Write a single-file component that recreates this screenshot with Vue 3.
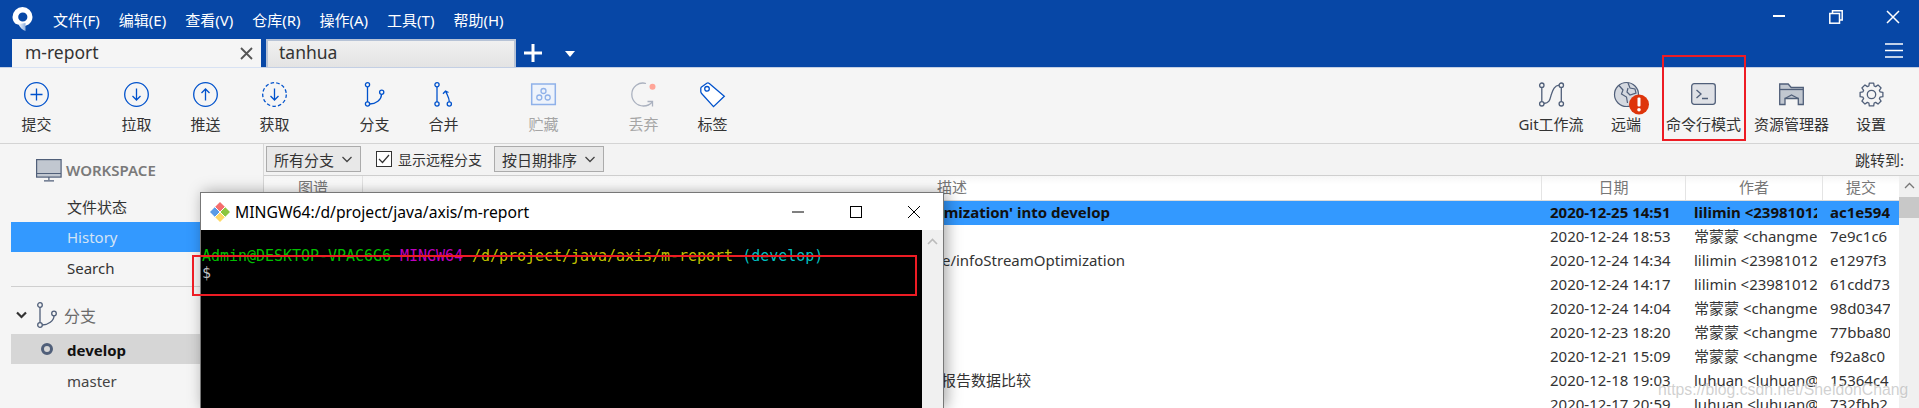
<script setup>
const menus = ['文件(F)', '编辑(E)', '查看(V)', '仓库(R)', '操作(A)', '工具(T)', '帮助(H)']
const lili = 'lilimin <23981012@qq.com>'
const chang = '常蒙蒙 <changmengmeng@qq.com>'
const lu = 'luhuan <luhuan@qq.com>'
const rows = [
  { date: '2020-12-25 14:51', author: 'lilimin <2398101234@qq.com>', hash: 'ac1e594', desc: "'feature/infoStreamOptimization' into develop", end: 432, sel: true },
  { date: '2020-12-24 18:53', author: chang, hash: '7e9c1c6', desc: '', end: 0 },
  { date: '2020-12-24 14:34', author: lili, hash: 'e1297f3', desc: 'origin/feature/infoStreamOptimization', end: 417 },
  { date: '2020-12-24 14:17', author: lili, hash: '61cdd73', desc: '', end: 0 },
  { date: '2020-12-24 14:04', author: chang, hash: '98d0347', desc: '', end: 0 },
  { date: '2020-12-23 18:20', author: chang, hash: '77bba80', desc: '', end: 0 },
  { date: '2020-12-21 15:09', author: chang, hash: 'f92a8c0', desc: '', end: 0 },
  { date: '2020-12-18 19:03', author: lu, hash: '15364c4', desc: '报告数据比较', end: 511 },
  { date: '2020-12-17 20:59', author: lu, hash: '732fbb2', desc: '', end: 0 }
]
function gearPath() {
  const cx = 12.5, cy = 12.5, n = 8
  let d = ''
  for (let i = 0; i < n; i++) {
    const a = (i / n) * Math.PI * 2
    const pts = [[-0.3, 8.9], [-0.19, 11.6], [0.19, 11.6], [0.3, 8.9]]
    pts.forEach(([o, r], j) => {
      const x = cx + r * Math.sin(a + o)
      const y = cy - r * Math.cos(a + o)
      d += (i === 0 && j === 0 ? 'M' : 'L') + x.toFixed(2) + ' ' + y.toFixed(2) + ' '
    })
  }
  return d + 'Z'
}
const gear = gearPath()
</script>

<template>
  <div class="app">
    <header class="head">
      <div class="menubar">
        <svg class="logo" width="21" height="24" viewBox="0 0 21 24">
          <defs>
            <linearGradient id="lg" x1="0" y1="0" x2="1" y2="0">
              <stop offset="0" stop-color="#fff" />
              <stop offset="1" stop-color="#8fb0de" />
            </linearGradient>
          </defs>
          <path fill-rule="evenodd" fill="#fff" d="M10.500 0a10 10 0 0 1 10 10c0 3-1.600 5.800-4 7.500L13 19C10 17.800 6.500 18 3.500 16.800 1.500 15 .5 12.500.5 10a10 10 0 0 1 10-10Zm.3 5.400a4.600 4.600 0 1 0 0 9.200 4.600 4.600 0 0 0 0-9.200Z" />
          <path fill="url(#lg)" d="M6 16.500c2 .5 4.500-.2 7.500-.5V24C10.500 23 8 20.500 6 16.500Z" />
        </svg>
        <nav class="menus">
          <span v-for="m in menus" :key="m">{{ m }}</span>
        </nav>
        <div class="winctl">
          <svg width="14" height="14" viewBox="0 0 14 14"><path d="M1 6h12" stroke="#fff" stroke-width="2" /></svg>
          <svg width="14" height="14" viewBox="0 0 14 14" fill="none" stroke="#fff" stroke-width="1.500"><path d="M3.500 3V.8h9.700v9.200H11" /><rect x=".8" y="3.500" width="9.700" height="9.700" /></svg>
          <svg width="14" height="14" viewBox="0 0 14 14" stroke="#fff" stroke-width="1.500"><path d="M1 1l12 12M13 1L1 13" /></svg>
        </div>
      </div>
      <div class="tabbar">
        <div class="tab active">
          <span>m-report</span>
          <svg width="13" height="13" viewBox="0 0 13 13" stroke="#555" stroke-width="1.800"><path d="M1 1l11 11M12 1L1 12" /></svg>
        </div>
        <div class="tab other"><span>tanhua</span></div>
        <svg class="plus" width="18" height="18" viewBox="0 0 18 18" stroke="#fff" stroke-width="3"><path d="M9 0v18M0 9h18" /></svg>
        <svg class="caret" width="10" height="6" viewBox="0 0 10 6"><path d="M0 0h10L5 6Z" fill="#fff" /></svg>
        <svg class="burger" width="18" height="15" viewBox="0 0 18 15" stroke="#fff" stroke-width="1.500"><path d="M0 1h18M0 7.500h18M0 14h18" /></svg>
      </div>
    </header>

    <section class="toolbar">
      <div class="tools-left">
        <div class="group">
          <div class="tool">
            <svg class="ic" viewBox="0 0 25 25" fill="none" stroke="#0052cc" stroke-width="1.300"><circle cx="12.500" cy="12.500" r="11.800" /><path d="M12.500 6.500v12M6.500 12.500h12" /></svg>
            <span>提交</span>
          </div>
        </div>
        <div class="group">
          <div class="tool">
            <svg class="ic" viewBox="0 0 25 25" fill="none" stroke="#0052cc" stroke-width="1.300"><circle cx="12.500" cy="12.500" r="11.800" /><path d="M12.500 6.500v11.500M8.500 14l4 4 4-4" /></svg>
            <span>拉取</span>
          </div>
          <div class="tool">
            <svg class="ic" viewBox="0 0 25 25" fill="none" stroke="#0052cc" stroke-width="1.300"><circle cx="12.500" cy="12.500" r="11.800" /><path d="M12.500 18.500V7M8.500 11l4-4 4 4" /></svg>
            <span>推送</span>
          </div>
          <div class="tool">
            <svg class="ic" viewBox="0 0 25 25" fill="none" stroke="#0052cc" stroke-width="1.300"><circle cx="12.500" cy="12.500" r="11.800" stroke-dasharray="3.500 2.200" /><path d="M12.500 6.500v11.500M8.500 14l4 4 4-4" /></svg>
            <span>获取</span>
          </div>
        </div>
        <div class="group">
          <div class="tool">
            <svg class="ic" viewBox="0 0 25 25" fill="none" stroke="#0052cc" stroke-width="1.300"><circle cx="5.500" cy="2.800" r="2.100" /><circle cx="5.500" cy="22" r="2.100" /><circle cx="19.700" cy="10.200" r="2.100" /><path d="M5.500 5v15M19.500 12.400C19.300 18 14 22 7.700 22" /></svg>
            <span>分支</span>
          </div>
          <div class="tool">
            <svg class="ic" viewBox="0 0 25 25" fill="none" stroke="#0052cc" stroke-width="1.300"><circle cx="6" cy="2.800" r="2.100" /><circle cx="6" cy="22" r="2.100" /><circle cx="18.300" cy="22" r="2.100" /><path d="M6 5v15M18.300 19.800C18.300 15.500 16 13 14.800 9.500M12 11.700l2.500-2.700 3 1.500" /></svg>
            <span>合并</span>
          </div>
        </div>
        <div class="group">
          <div class="tool dim">
            <svg class="ic" viewBox="0 0 25 25" fill="#eef3fb" stroke="#8fb1e9" stroke-width="1.300"><rect x=".7" y="2" width="23.600" height="20.500" stroke-width="1.500" /><circle cx="12.500" cy="9" r="2.500" fill="none" /><circle cx="8.300" cy="15.500" r="2.500" fill="none" /><circle cx="16.700" cy="15.500" r="2.500" fill="none" /></svg>
            <span>贮藏</span>
          </div>
        </div>
        <div class="group">
          <div class="tool dim">
            <svg class="ic" viewBox="0 0 25 25" fill="none" stroke="#aab1bf" stroke-width="1.300"><path d="M15 1.500C8 -.5 .8 4.500 .8 12.300.8 19 6 24 12.500 24c3.500 0 6.500-1.300 8.800-4" /><path d="M16.500 19.500h5v5" /><circle cx="21.500" cy="4.800" r="3" fill="#ffa598" stroke="none" /></svg>
            <span>丢弃</span>
          </div>
          <div class="tool">
            <svg class="ic" viewBox="0 0 25 25" fill="#fff" stroke="#0052cc" stroke-width="1.300"><path d="M1.200 5.300 6.800 1.200Q8 .4 9 1.300L24.300 14.200 13.500 24.600 1.600 11.500Q.8 10.600.8 9.500V6.500Q.8 5.800 1.200 5.300Z" /><circle cx="7" cy="6.800" r="2.300" fill="none" /></svg>
            <span>标签</span>
          </div>
        </div>
      </div>
      <div class="tools-right">
        <div class="tool">
          <svg class="ic" viewBox="0 0 25 25" fill="none" stroke="#505f79" stroke-width="1.300"><circle cx="2.800" cy="3.200" r="2.200" /><circle cx="2.800" cy="21.800" r="2.200" /><circle cx="22.300" cy="3.200" r="2.200" /><circle cx="22.300" cy="21.800" r="2.200" /><path d="M2.800 5.400v14.200M22.300 5.400v14.200M5 21.500c6.500-.5 6-5.500 7.500-9.500 1.500-4.500 3-8.500 7.600-8.800" /></svg>
          <span>Git工作流</span>
        </div>
        <div class="tool">
          <svg class="ic ic-over" viewBox="0 0 37 35">
            <circle cx="12.500" cy="12.500" r="12" fill="#d5d9e0" stroke="#505f79" stroke-width="1.200" />
            <path d="M5 3.500 9 8l-1.500 4 5 3 1 6M14 1l2 5 5 1 1 4-6 2-3-3 1-4" fill="none" stroke="#505f79" stroke-width="1.200" />
            <circle cx="25" cy="22.500" r="10" fill="#de350b" />
            <rect x="23.500" y="15.500" width="3" height="9" rx="1" fill="#fff" />
            <circle cx="25" cy="27.800" r="1.800" fill="#fff" />
          </svg>
          <span>远端</span>
        </div>
        <div class="tool">
          <svg class="ic" viewBox="0 0 25 25" fill="none" stroke="#505f79" stroke-width="1.300"><rect x=".7" y="1.700" width="23.600" height="20.600" rx="2.500" fill="#dfe1e6" /><path d="M5.500 8l4.500 4-4.500 4M11 16.500h6" /></svg>
          <span>命令行模式</span>
        </div>
        <div class="tool">
          <svg class="ic" viewBox="0 0 25 25" fill="#c1c7d0" stroke="#505f79" stroke-width="1.300"><path d="M.7 22.500V2h8.500l3 3.500h12.100v17h-5v-6H6v6Z" /><path d="M1 7.500h23" fill="none" /><path d="M6 16.500l6.500-3.500 6.800 3.500" fill="none" /></svg>
          <span>资源管理器</span>
        </div>
        <div class="tool">
          <svg class="ic" viewBox="0 0 25 25" fill="none" stroke="#505f79" stroke-width="1.300"><path :d="gear" stroke-linejoin="round" /><circle cx="12.500" cy="12.500" r="4.200" /></svg>
          <span>设置</span>
        </div>
      </div>
    </section>

    <main class="main">
      <aside class="side">
        <div class="ws">
          <svg width="26" height="23" viewBox="0 0 26 23" fill="#c1c7d0" stroke="#505f79" stroke-width="1.200"><rect x=".6" y=".6" width="24.500" height="17.500" /><path d="M1 14.500h24M12.900 18v3M8 21.800h10" fill="none" /></svg>
          <span>WORKSPACE</span>
        </div>
        <div class="item first">文件状态</div>
        <div class="item hist">History</div>
        <div class="item low">Search</div>
        <div class="sep"></div>
        <div class="branches">
          <svg width="11" height="8" viewBox="0 0 11 8" fill="none" stroke="#333" stroke-width="2.200"><path d="M1 1.500l4.500 4.500L10 1.500" /></svg>
          <svg width="21" height="26" viewBox="0 0 21 26" fill="none" stroke="#505f79" stroke-width="1.300"><circle cx="4" cy="3" r="2.300" /><circle cx="4" cy="23" r="2.300" /><circle cx="18" cy="11.500" r="2.300" /><path d="M4 5.300v15.400M18 13.800C18 19 12 23 6.300 23" /></svg>
          <span>分支</span>
        </div>
        <div class="item cur low"><i class="dot"></i>develop</div>
        <div class="item master">master</div>
      </aside>

      <div class="content">
        <div class="filters">
          <div class="drop d1">所有分支<svg width="12" height="7" viewBox="0 0 12 7" fill="none" stroke="#444" stroke-width="1.300"><path d="M1.500 1l4.500 4.500L10.500 1" /></svg></div>
          <div class="chk">
            <svg width="16" height="16" viewBox="0 0 16 16" fill="#fff" stroke="#333" stroke-width="1"><rect x=".5" y=".5" width="15" height="15" /><path d="M3 8l3.500 3.500L13 4" fill="none" stroke-width="1.200" /></svg>
            <span>显示远程分支</span>
          </div>
          <div class="drop d2">按日期排序<svg width="12" height="7" viewBox="0 0 12 7" fill="none" stroke="#444" stroke-width="1.300"><path d="M1.500 1l4.500 4.500L10.500 1" /></svg></div>
          <span class="jump">跳转到:</span>
        </div>
        <div class="tablewrap">
          <div class="table">
            <div class="thead">
              <div>图谱</div><div>描述</div><div>日期</div><div>作者</div><div>提交</div>
            </div>
            <div v-for="r in rows" :key="r.hash" class="row" :class="{ sel: r.sel }">
              <div class="graph"></div>
              <div class="desc" :style="{ paddingRight: r.end + 'px' }">{{ r.desc }}</div>
              <div class="cell date">{{ r.date }}</div>
              <div class="cell author">{{ r.author }}</div>
              <div class="cell hash">{{ r.hash }}</div>
            </div>
          </div>
          <div class="sb">
            <svg width="11" height="7" viewBox="0 0 11 7" fill="none" stroke="#777" stroke-width="1.300"><path d="M1 6l4.500-4.500L10 6" /></svg>
            <div class="thumb"></div>
          </div>
        </div>
      </div>
    </main>

    <div class="term">
      <div class="term-title">
        <svg width="20" height="20" viewBox="0 0 20 20">
          <path d="M10 0 5 5l5 5 5-5Z" fill="#f46d6d" />
          <path d="M5 5 0 10l5 5 5-5Z" fill="#5b9be6" />
          <path d="M15 5l-5 5 5 5 5-5Z" fill="#8dc63f" />
          <path d="M10 10l-5 5 5 5 5-5Z" fill="#ffd966" />
          <path d="M5 5l10 10M15 5 5 15" stroke="#fff" stroke-width="1" />
        </svg>
        <span class="tt">MINGW64:/d/project/java/axis/m-report</span>
        <div class="tctl">
          <svg width="12" height="12" viewBox="0 0 12 12" stroke="#000"><path d="M0 6h12" /></svg>
          <svg width="12" height="12" viewBox="0 0 12 12" fill="none" stroke="#000"><rect x=".5" y=".5" width="11" height="11" /></svg>
          <svg width="12" height="12" viewBox="0 0 12 12" stroke="#000"><path d="M0 0l12 12M12 0 0 12" /></svg>
        </div>
      </div>
      <div class="term-body">
        <pre class="tty"><span class="g">Admin@DESKTOP-VPAC6G6</span> <span class="m">MINGW64</span> <span class="y">/d/project/java/axis/m-report</span> <span class="c">(develop)</span>
<span class="w">$</span></pre>
        <div class="term-sb">
          <svg width="11" height="7" viewBox="0 0 11 7" fill="none" stroke="#bbb" stroke-width="1.600"><path d="M1 6l4.500-4.500L10 6" /></svg>
        </div>
      </div>
    </div>

    <div class="red r1"></div>
    <div class="red r2"></div>
    <div class="mark">https://blog.csdn.net/SheldonChang</div>
  </div>
</template>

<style>
html, body { margin: 0; overflow: hidden; background: #f5f5f5; }
</style>

<style scoped>
.app {
  position: relative;
  width: 1919px;
  height: 408px;
  overflow: hidden;
  font-family: "Noto Sans", "Noto Sans CJK SC", sans-serif;
  font-size: 15px;
  color: #333;
  background: #f5f5f5;
}
svg { display: block; flex: none; }
.head { background: #0747a6; height: 67px; border-bottom: 1px solid #c3cfe4; }
.menubar { height: 39px; display: flex; align-items: center; position: relative; }
.logo { margin-left: 12px; margin-top: -1px; }
.menus { display: flex; gap: 19px; margin-left: 20px; color: #fff; line-height: 38px; }
.winctl { margin-left: auto; margin-right: 19px; display: flex; gap: 43px; margin-top: -5px; }
.tabbar { height: 28px; display: flex; align-items: flex-start; position: relative; padding-left: 12px; }
.tab {
  box-sizing: border-box;
  height: 29px;
  display: flex;
  align-items: center;
  font-size: 17.500px;
  color: #333;
}
.tab.active { width: 249px; background: #f5f5f5; padding: 0 8px 3px 13px; justify-content: space-between; border-bottom: 1px solid #d8e2f3; }
.tab.active svg { margin-top: 3px; }
.tab.other {
  width: 250px;
  height: 28px;
  margin-left: 5px;
  padding: 0 0 4px 11px;
  background: linear-gradient(#f0f0f0, #e3e3e3);
  border: 2px solid #b7c3d6;
  border-bottom: 0;
}
.plus { margin: 5px 0 0 8px; }
.caret { margin: 12px 0 0 23px; }
.burger { margin: 4px 16px 0 auto; }

.toolbar {
  box-sizing: border-box;
  height: 76px;
  display: flex;
  justify-content: space-between;
  border-bottom: 1px solid #d4d4d4;
  background: #f5f5f5;
}
.tools-left { display: flex; gap: 31px; padding-left: 2px; }
.group { display: flex; }
.group .tool { width: 69px; }
.tools-right { display: grid; grid-template-columns: 88px 62px 93px 83px 76px; padding-right: 10px; }
.tool { display: flex; flex-direction: column; align-items: center; padding-top: 14px; color: #333; position: relative; }
.tool span { line-height: 20px; margin-top: 7px; white-space: nowrap; }
.tool.dim span { color: #a5a5a5; }
.ic { width: 25px; height: 25px; overflow: visible; }
.ic-over { width: 37px; height: 35px; margin: 0 -12px -10px 0; }

.main { display: flex; height: 264px; }
.side { width: 263px; border-right: 1px solid #d8d8d8; flex: none; box-sizing: content-box; }
.ws { display: flex; align-items: center; gap: 4px; height: 30px; margin: 11px 0 0 36px; font-weight: 600; color: #7a7a7a; }
.item { margin-left: 11px; padding-left: 56px; height: 30px; line-height: 30px; position: relative; }
.item.first { margin-top: 7px; }
.item.hist { background: #3399ff; color: #d3e4f5; }
.item.low { line-height: 32px; }
.item.master { margin-top: 2px; color: #444; }
.sep { margin: 4px 0 0 11px; border-top: 1px solid #cfcfcf; }
.branches { display: flex; align-items: center; height: 30px; margin-top: 13px; padding-left: 16px; color: #6b6b6b; font-size: 16px; }
.branches svg:nth-child(2) { margin: 0 7px 0 9px; }
.item.cur { margin-top: 4px; background: #d6d6d6; font-weight: 700; color: #111; }
.dot { position: absolute; left: 30px; top: 9px; width: 6px; height: 6px; border: 3px solid #505f79; border-radius: 50%; }

.content { flex: 1; min-width: 0; display: flex; flex-direction: column; }
.filters { box-sizing: border-box; height: 32px; display: flex; align-items: flex-start; background: #f3f3f3; border-bottom: 1px solid #cfcfcf; position: relative; padding: 2px 0 0 2px; }
.drop { box-sizing: border-box; height: 26px; display: flex; align-items: center; justify-content: space-between; background: #e8e8e8; border: 1px solid #ababab; padding: 0 7px; }
.d1 { width: 95px; }
.d2 { width: 110px; margin-left: 13px; }
.chk { display: flex; align-items: center; height: 26px; gap: 6px; margin-left: 15px; width: 105px; white-space: nowrap; font-size: 14px; }
.jump { margin-left: auto; margin-right: 15px; line-height: 28px; }
.tablewrap { flex: 1; display: flex; min-height: 0; }
.table { width: 1635px; flex: none; background: #fff; overflow: hidden; }
.thead { display: grid; grid-template-columns: 99px 1179px 144px 137px 76px; height: 25px; box-sizing: border-box; background: linear-gradient(#f6f6f6, #fff 35%); border-bottom: 1px solid #dcdcdc; }
.thead div { text-align: center; color: #777; line-height: 22px; border-right: 1px solid #e4e4e4; }
.thead div:last-child { border-right: 0; }
.row { display: grid; grid-template-columns: 99px 1179px 144px 137px 76px; height: 24px; line-height: 22px; }
.row.sel { background: #3399ff; color: #111; font-weight: 700; }
.desc { text-align: right; white-space: nowrap; overflow: hidden; box-sizing: border-box; }
.cell { white-space: nowrap; overflow: hidden; }
.date { padding-left: 8px; }
.author { padding-left: 8px; margin-right: 6px; }
.hash { padding-left: 7px; margin-right: 9px; }
.sb { flex: 1; background: #f0f0f0; position: relative; }
.sb svg { margin: 6px auto 0; }
.thumb { position: absolute; left: 0; right: 0; top: 21px; height: 21px; background: #c8c8c8; }

.term { position: absolute; left: 200px; top: 192px; width: 744px; height: 216px; box-sizing: border-box; border: 1px solid #777; border-bottom: 0; background: #fff; box-shadow: 3px 0 14px rgba(0, 0, 0, .35); display: flex; flex-direction: column; }
.term-title { height: 37px; flex: none; display: flex; align-items: center; padding-left: 9px; color: #000; }
.tt { margin-left: 5px; font-size: 15.700px; white-space: nowrap; }
.tctl { margin-left: auto; margin-right: 23px; display: flex; gap: 46px; }
.term-body { flex: 1; background: #000; display: flex; justify-content: space-between; min-height: 0; }
.tty { margin: 0; padding: 18px 0 0 1px; font-family: "DejaVu Sans Mono", monospace; font-size: 15px; line-height: 17px; letter-spacing: -.03px; }
.g { color: #00bf00; }
.m { color: #bf00bf; }
.y { color: #bfbf00; }
.c { color: #00bfbf; }
.w { color: #bfbfbf; }
.term-sb { width: 21px; background: #f0f0f0; }
.term-sb svg { margin: 8px auto 0; }

.red { position: absolute; box-sizing: border-box; border: 2px solid #ed1c24; }
.r1 { left: 1662px; top: 55px; width: 84px; height: 86px; }
.r2 { left: 192px; top: 255px; width: 725px; height: 41px; }
.mark { position: absolute; left: 1658px; top: 378px; font-family: "Liberation Sans", sans-serif; font-size: 15.800px; line-height: 24px; color: rgba(170, 170, 170, .55); text-shadow: 1px 1px 0 rgba(255, 255, 255, .5); white-space: nowrap; }
</style>
